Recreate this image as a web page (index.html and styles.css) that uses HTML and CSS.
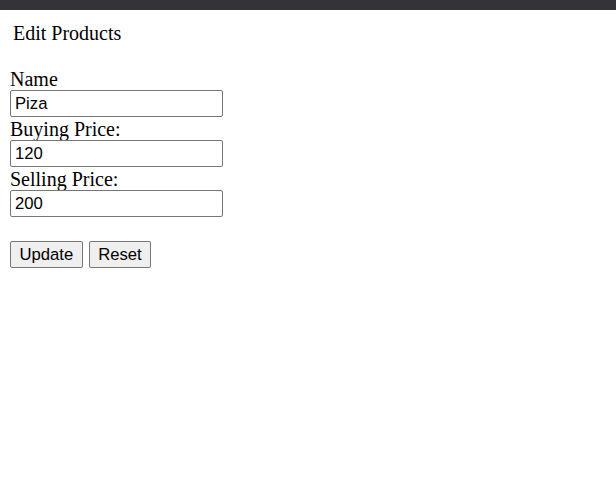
FILE: index.html
```html
<!DOCTYPE html>
<html>
<head>
<meta charset="utf-8">
<link rel="stylesheet" href="styles.css">
</head>
<body>
<div class="topbar"></div>
<div class="page">
  <h2 class="title">Edit Products</h2>
  <form class="form">
    <label class="label">Name</label>
    <input class="field" type="text" value="Piza">
    <label class="label">Buying Price:</label>
    <input class="field" type="text" value="120">
    <label class="label">Selling Price:</label>
    <input class="field" type="text" value="200">
    <div class="actions">
      <button type="button" class="btn btn-update">Update</button>
      <button type="button" class="btn btn-reset">Reset</button>
    </div>
  </form>
</div>
</body>
</html>
```
FILE: styles.css
```css
html, body {
  margin: 0;
  padding: 0;
  background: #ffffff;
}
body {
  font-family: "Liberation Serif", "Times New Roman", serif;
  font-size: 20px;
  color: #000;
}
.topbar {
  height: 10px;
  background: #323437;
}
.page {
  padding: 0 10px;
}
.title {
  margin: 0;
  padding: 12px 0 0 3px;
  font-size: 20px;
  font-weight: normal;
  line-height: 23px;
  height: 45px;
}
.form {
  display: flex;
  flex-direction: column;
  align-items: flex-start;
}
.label {
  display: block;
  line-height: 25px;
  height: 23px;
  overflow: visible;
}
.field {
  box-sizing: border-box;
  width: 213px;
  height: 27px;
  flex: 0 0 27px;
  margin: 0;
  padding: 0 4px;
  border: 1px solid #767676;
  border-radius: 2px;
  font-family: "Liberation Sans", Arial, sans-serif;
  font-size: 16.67px;
  color: #000;
  background: #fff;
}
.actions {
  display: flex;
  gap: 6px;
  margin-top: 24px;
}
.btn {
  box-sizing: border-box;
  height: 27px;
  margin: 0;
  padding: 0 8.5px;
  border: 1px solid #767676;
  border-radius: 2px;
  background: #efefef;
  font-family: "Liberation Sans", Arial, sans-serif;
  font-size: 16.67px;
  color: #000;
}
```
